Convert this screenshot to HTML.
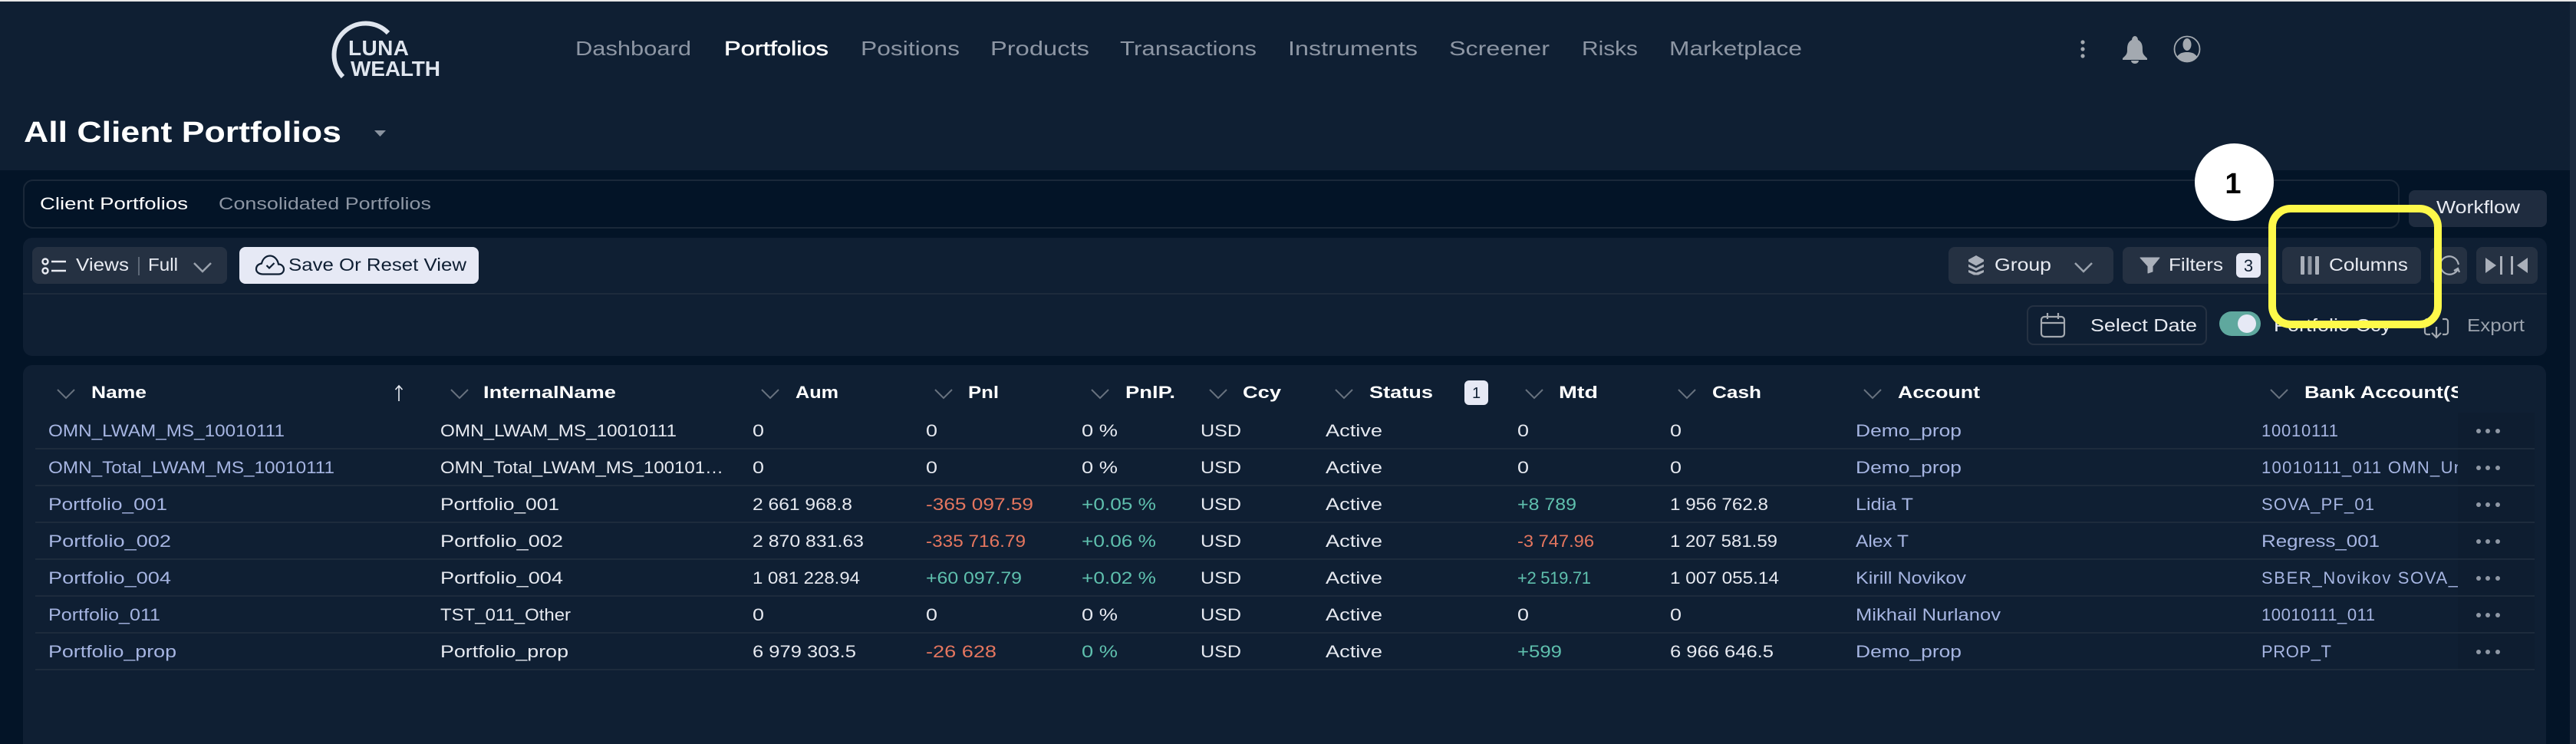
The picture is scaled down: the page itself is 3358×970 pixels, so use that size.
<!DOCTYPE html>
<html lang="en"><head><meta charset="utf-8"><title>All Client Portfolios</title>
<style>
html,body{margin:0;padding:0;width:3358px;height:970px;overflow:hidden;background:#031427}
svg{display:block;font-family:"Liberation Sans",sans-serif}
text{white-space:pre}
.r{font-size:22px;fill:#e6e9f0}
.n{font-size:22px;fill:#a6b5e2}
.g{font-size:22px;fill:#5fc0ae}
.d{font-size:22px;fill:#e5765f}
.h{font-size:22px;font-weight:700;fill:#fff}
.nav{font-size:26px;fill:#8d96a4}
.b{font-size:23px;fill:#e8ebf2}
.chev{fill:none;stroke:#68727f;stroke-width:2}
.bchev{fill:none;stroke:#9aa2ad;stroke-width:2.5}
.l{fill:#1d2b3c}
.dot{fill:#8f98a5}
</style></head><body>
<svg width="3358" height="970" viewBox="0 0 3358 970" xmlns="http://www.w3.org/2000/svg">
<defs>
<clipPath id="c1"><rect x="2940" y="490" width="264" height="400"/></clipPath>
<clipPath id="c2"><rect x="1460" y="490" width="72" height="50"/></clipPath>
</defs>
<rect width="3358" height="970" fill="#031427"/>
<rect width="3358" height="222" fill="#0f1f33"/>
<rect width="3358" height="2" fill="#e8e8e8"/>
<rect x="3350" y="2" width="8" height="968" fill="#1e2c3f"/>

<!-- logo -->
<path d="M447 100A41 41 0 0 1 506 43" fill="none" stroke="#dfe5ee" stroke-width="6"/>
<text x="454" y="72" font-size="28" font-weight="700" fill="#dfe5ee" textLength="79">LUNA</text>
<text x="457" y="99" font-size="28" font-weight="700" fill="#dfe5ee" textLength="117">WEALTH</text>

<!-- nav -->
<text class="nav" x="750" y="72" textLength="151" lengthAdjust="spacingAndGlyphs">Dashboard</text>
<text class="nav" x="944" y="72" textLength="136" lengthAdjust="spacingAndGlyphs" style="fill:#fff;stroke:#fff;stroke-width:.5">Portfolios</text>
<text class="nav" x="1122" y="72" textLength="129" lengthAdjust="spacingAndGlyphs">Positions</text>
<text class="nav" x="1291" y="72" textLength="129" lengthAdjust="spacingAndGlyphs">Products</text>
<text class="nav" x="1460" y="72" textLength="178" lengthAdjust="spacingAndGlyphs">Transactions</text>
<text class="nav" x="1679" y="72" textLength="169" lengthAdjust="spacingAndGlyphs">Instruments</text>
<text class="nav" x="1889" y="72" textLength="131" lengthAdjust="spacingAndGlyphs">Screener</text>
<text class="nav" x="2062" y="72" textLength="73" lengthAdjust="spacingAndGlyphs">Risks</text>
<text class="nav" x="2176" y="72" textLength="173" lengthAdjust="spacingAndGlyphs">Marketplace</text>

<!-- header icons -->
<g fill="#a3a9b0">
<circle cx="2715" cy="55" r="2.6"/><circle cx="2715" cy="64" r="2.6"/><circle cx="2715" cy="73" r="2.6"/>
<path d="M2779 52a4 5 0 0 1 8 0c6 3 6 9 6 14c0 5 3 7 6 10v2h-32v-2c3-3 6-5 6-10c0-5 0-11 6-14z"/>
<path d="M2778 79h10a5 4 0 0 1-10 0z"/>
<ellipse cx="2851" cy="58" rx="5.5" ry="8"/>
<path d="M2838 74c3-5 8-6 13-6s10 1 13 6a16.5 16.5 0 0 1-26 0z"/>
</g>
<circle cx="2851" cy="64" r="16.5" fill="none" stroke="#a3a9b0" stroke-width="1.8"/>

<!-- title -->
<text x="31" y="185" font-size="38" font-weight="700" fill="#fff" textLength="414" lengthAdjust="spacingAndGlyphs">All Client Portfolios</text>
<path d="M488 170h15l-7.500 8z" fill="#8a93a0"/>

<!-- tab bar -->
<rect x="31" y="235" width="3096" height="62" rx="12" fill="#031427" stroke="#1a2839" stroke-width="2"/>
<text class="r" x="52" y="273" textLength="193" lengthAdjust="spacingAndGlyphs" style="fill:#fff">Client Portfolios</text>
<text class="r" x="285" y="273" textLength="277" lengthAdjust="spacingAndGlyphs" style="fill:#8d96a4">Consolidated Portfolios</text>
<rect x="3140" y="248" width="180" height="48" rx="8" fill="#1f2c3f"/>
<text class="b" x="3176" y="278" textLength="109" lengthAdjust="spacingAndGlyphs">Workflow</text>

<!-- toolbar panel -->
<rect x="30" y="310" width="3290" height="154" rx="12" fill="#0f1f33"/>
<rect x="30" y="382" width="3290" height="2" class="l"/>

<!-- views -->
<rect x="42" y="322" width="254" height="48" rx="8" fill="#253142"/>
<g fill="none" stroke="#e8ebf2" stroke-width="2.400">
<circle cx="59" cy="341" r="3.500"/><circle cx="59" cy="353" r="3.500"/>
<path d="M67 341h19M67 353h19"/>
</g>
<text class="b" x="99" y="353" textLength="69" lengthAdjust="spacingAndGlyphs">Views</text>
<rect x="180" y="335" width="2" height="24" fill="#5d6877"/>
<text class="b" x="193" y="353" textLength="39" lengthAdjust="spacingAndGlyphs">Full</text>
<path class="bchev" d="M253 343l11 11 11-11"/>

<!-- save -->
<rect x="312" y="322" width="312" height="48" rx="8" fill="#e6e9f5"/>
<path d="M343 357.500h20c4.500 0 7-3 7-6.500s-3-6.500-7-6.500c-1-6-5.500-11-11-11s-9.500 4-11 10c-5 1-7 4-7 7.500s3.500 6.500 9 6.500z" fill="none" stroke="#0f1f33" stroke-width="2.200"/>
<path d="M347.500 346l3.500 3.500 6.500-6.500" fill="none" stroke="#0f1f33" stroke-width="2.200"/>
<text class="b" x="376" y="353" textLength="232" lengthAdjust="spacingAndGlyphs" style="fill:#0f1f33">Save Or Reset View</text>

<!-- group -->
<rect x="2540" y="322" width="215" height="48" rx="8" fill="#253142"/>
<g fill="#aab0ba">
<path d="M2576 333l10 5.500v2.500l-10 5.500-10-5.500v-2.500z"/>
<path d="M2566 344.500l10 5 10-5v3.500l-10 5-10-5z"/>
<path d="M2566 352l10 3.500 10-3.500v3l-7 3.500h-6l-7-3.500z"/>
</g>
<text class="b" x="2600" y="353" textLength="74" lengthAdjust="spacingAndGlyphs">Group</text>
<path class="bchev" d="M2705 343l11 11 11-11"/>

<!-- filters -->
<rect x="2767" y="322" width="200" height="48" rx="8" fill="#253142"/>
<path d="M2790 336h25l-9 11v7l-6 2v-9z" fill="#aab0ba" stroke="#aab0ba" stroke-linejoin="round"/>
<text class="b" x="2827" y="353" textLength="71" lengthAdjust="spacingAndGlyphs">Filters</text>
<rect x="2915" y="330" width="32" height="32" rx="6" fill="#e6e9f5"/>
<text x="2931" y="354" font-size="22" fill="#0f1f33" text-anchor="middle">3</text>

<!-- columns -->
<rect x="2975" y="322" width="181" height="48" rx="8" fill="#253142"/>
<rect x="2999" y="334" width="5" height="24" rx="1" fill="#aab0ba"/>
<rect x="3008.500" y="334" width="5" height="24" rx="1" fill="#8f96a2"/>
<rect x="3018" y="334" width="5" height="24" rx="1" fill="#aab0ba"/>
<text class="b" x="3036" y="353" textLength="103" lengthAdjust="spacingAndGlyphs">Columns</text>

<!-- refresh -->
<rect x="3168" y="322" width="48" height="48" rx="8" fill="#253142"/>
<g fill="none" stroke="#aab0ba" stroke-width="2.200">
<path d="M3182 341a12 12 0 0 1 22 1l1 3"/>
<path d="M3204 351a12 12 0 0 1-22-1"/>
<path d="M3199 353l5-3 2 5"/>
</g>

<!-- collapse -->
<rect x="3228" y="322" width="80" height="48" rx="8" fill="#253142"/>
<g fill="#aab0ba">
<path d="M3240 336l14 10-14 10z"/><rect x="3259" y="334" width="3" height="24"/>
<rect x="3273" y="334" width="3" height="24"/><path d="M3295 336l-14 10 14 10z"/>
</g>

<!-- second row -->
<rect x="2643" y="399" width="233" height="50" rx="8" fill="none" stroke="#253142" stroke-width="2"/>
<g fill="none" stroke="#a3a9b0" stroke-width="2.200">
<rect x="2661" y="413" width="30" height="26" rx="4"/>
<path d="M2661 421h30M2669 408v8M2683 408v8"/>
</g>
<text class="b" x="2725" y="432" textLength="139" lengthAdjust="spacingAndGlyphs">Select Date</text>
<rect x="2893" y="406" width="54" height="32" rx="16" fill="#5fa89e"/>
<circle cx="2929" cy="422" r="12" fill="#e6e9f5"/>
<text class="b" x="2964" y="432" textLength="153" lengthAdjust="spacingAndGlyphs">Portfolio Ccy</text>
<g fill="none" stroke="#a3a9b0" stroke-width="2.200">
<path d="M3168 416h-4a3 3 0 0 0-3 3v14a3 3 0 0 0 3 3h4M3184 416h4a3 3 0 0 1 3 3v14a3 3 0 0 1-3 3h-4"/>
<path d="M3176 426v14M3170 434l6 6 6-6"/>
</g>
<text class="b" x="3216" y="432" textLength="75" lengthAdjust="spacingAndGlyphs" style="fill:#9aa2ad">Export</text>

<!-- table panel -->
<rect x="30" y="476" width="3289" height="520" rx="12" fill="#0f1f33"/>
<rect x="3204" y="538" width="100" height="337" fill="#0e1d30"/>

<!-- header chevrons -->
<path class="chev" d="M75 508l11 11 11-11M588 508l11 11 11-11M993 508l11 11 11-11M1219 508l11 11 11-11M1423 508l11 11 11-11M1577 508l11 11 11-11M1741 508l11 11 11-11M1989 508l11 11 11-11M2188 508l11 11 11-11M2430 508l11 11 11-11M2960 508l11 11 11-11"/>
<text class="h" x="119" y="519" textLength="72" lengthAdjust="spacingAndGlyphs">Name</text>
<path d="M520 523v-20M515.500 508l4.500-5 4.500 5" fill="none" stroke="#e8ebf2" stroke-width="1.600"/>
<text class="h" x="630" y="519" textLength="173" lengthAdjust="spacingAndGlyphs">InternalName</text>
<text class="h" x="1037" y="519" textLength="56" lengthAdjust="spacingAndGlyphs">Aum</text>
<text class="h" x="1262" y="519" textLength="40" lengthAdjust="spacingAndGlyphs">Pnl</text>
<text class="h" x="1467" y="519" textLength="65" lengthAdjust="spacingAndGlyphs" clip-path="url(#c2)">PnlP.</text>
<text class="h" x="1620" y="519" textLength="50" lengthAdjust="spacingAndGlyphs">Ccy</text>
<text class="h" x="1785" y="519" textLength="83" lengthAdjust="spacingAndGlyphs">Status</text>
<rect x="1909" y="496" width="31" height="32" rx="6" fill="#e6e9f5"/>
<text x="1924.500" y="519" font-size="20" fill="#0f1f33" text-anchor="middle">1</text>
<text class="h" x="2032" y="519" textLength="51" lengthAdjust="spacingAndGlyphs">Mtd</text>
<text class="h" x="2232" y="519" textLength="64" lengthAdjust="spacingAndGlyphs">Cash</text>
<text class="h" x="2474" y="519" textLength="107" lengthAdjust="spacingAndGlyphs">Account</text>
<text class="h" x="3004" y="519" textLength="208" lengthAdjust="spacingAndGlyphs" clip-path="url(#c1)">Bank Account(S</text>

<!-- row lines -->
<rect class="l" x="46" y="584" width="3258" height="2"/>
<rect class="l" x="46" y="632" width="3258" height="2"/>
<rect class="l" x="46" y="680" width="3258" height="2"/>
<rect class="l" x="46" y="728" width="3258" height="2"/>
<rect class="l" x="46" y="776" width="3258" height="2"/>
<rect class="l" x="46" y="824" width="3258" height="2"/>
<rect class="l" x="46" y="872" width="3258" height="2"/>

<!-- Name col -->
<text class="n" x="63" y="569" textLength="308" lengthAdjust="spacingAndGlyphs">OMN_LWAM_MS_10010111</text>
<text class="n" x="63" y="617" textLength="373" lengthAdjust="spacingAndGlyphs">OMN_Total_LWAM_MS_10010111</text>
<text class="n" x="63" y="665" textLength="155" lengthAdjust="spacingAndGlyphs">Portfolio_001</text>
<text class="n" x="63" y="713" textLength="160" lengthAdjust="spacingAndGlyphs">Portfolio_002</text>
<text class="n" x="63" y="761" textLength="160" lengthAdjust="spacingAndGlyphs">Portfolio_004</text>
<text class="n" x="63" y="809" textLength="146" lengthAdjust="spacingAndGlyphs">Portfolio_011</text>
<text class="n" x="63" y="857" textLength="167" lengthAdjust="spacingAndGlyphs">Portfolio_prop</text>

<!-- InternalName -->
<text class="r" x="574" y="569" textLength="308" lengthAdjust="spacingAndGlyphs">OMN_LWAM_MS_10010111</text>
<text class="r" x="574" y="617" textLength="369" lengthAdjust="spacingAndGlyphs">OMN_Total_LWAM_MS_100101…</text>
<text class="r" x="574" y="665" textLength="155" lengthAdjust="spacingAndGlyphs">Portfolio_001</text>
<text class="r" x="574" y="713" textLength="160" lengthAdjust="spacingAndGlyphs">Portfolio_002</text>
<text class="r" x="574" y="761" textLength="160" lengthAdjust="spacingAndGlyphs">Portfolio_004</text>
<text class="r" x="574" y="809" textLength="170" lengthAdjust="spacingAndGlyphs">TST_011_Other</text>
<text class="r" x="574" y="857" textLength="167" lengthAdjust="spacingAndGlyphs">Portfolio_prop</text>

<!-- Aum -->
<text class="r" x="981" y="569" textLength="15" lengthAdjust="spacingAndGlyphs">0</text>
<text class="r" x="981" y="617" textLength="15" lengthAdjust="spacingAndGlyphs">0</text>
<text class="r" x="981" y="665" textLength="130" lengthAdjust="spacingAndGlyphs">2 661 968.8</text>
<text class="r" x="981" y="713" textLength="145" lengthAdjust="spacingAndGlyphs">2 870 831.63</text>
<text class="r" x="981" y="761" textLength="140" lengthAdjust="spacingAndGlyphs">1 081 228.94</text>
<text class="r" x="981" y="809" textLength="15" lengthAdjust="spacingAndGlyphs">0</text>
<text class="r" x="981" y="857" textLength="135" lengthAdjust="spacingAndGlyphs">6 979 303.5</text>

<!-- Pnl -->
<text class="r" x="1207" y="569" textLength="15" lengthAdjust="spacingAndGlyphs">0</text>
<text class="r" x="1207" y="617" textLength="15" lengthAdjust="spacingAndGlyphs">0</text>
<text class="d" x="1207" y="665" textLength="140" lengthAdjust="spacingAndGlyphs">-365 097.59</text>
<text class="d" x="1207" y="713" textLength="130" lengthAdjust="spacingAndGlyphs">-335 716.79</text>
<text class="g" x="1207" y="761" textLength="125" lengthAdjust="spacingAndGlyphs">+60 097.79</text>
<text class="r" x="1207" y="809" textLength="15" lengthAdjust="spacingAndGlyphs">0</text>
<text class="d" x="1207" y="857" textLength="92" lengthAdjust="spacingAndGlyphs">-26 628</text>

<!-- PnlP -->
<text class="r" x="1410" y="569" textLength="47" lengthAdjust="spacingAndGlyphs">0 %</text>
<text class="r" x="1410" y="617" textLength="47" lengthAdjust="spacingAndGlyphs">0 %</text>
<text class="g" x="1410" y="665" textLength="97" lengthAdjust="spacingAndGlyphs">+0.05 %</text>
<text class="g" x="1410" y="713" textLength="97" lengthAdjust="spacingAndGlyphs">+0.06 %</text>
<text class="g" x="1410" y="761" textLength="97" lengthAdjust="spacingAndGlyphs">+0.02 %</text>
<text class="r" x="1410" y="809" textLength="47" lengthAdjust="spacingAndGlyphs">0 %</text>
<text class="g" x="1410" y="857" textLength="47" lengthAdjust="spacingAndGlyphs">0 %</text>

<!-- Ccy -->
<text class="r" x="1565" y="569" textLength="53" lengthAdjust="spacingAndGlyphs">USD</text>
<text class="r" x="1565" y="617" textLength="53" lengthAdjust="spacingAndGlyphs">USD</text>
<text class="r" x="1565" y="665" textLength="53" lengthAdjust="spacingAndGlyphs">USD</text>
<text class="r" x="1565" y="713" textLength="53" lengthAdjust="spacingAndGlyphs">USD</text>
<text class="r" x="1565" y="761" textLength="53" lengthAdjust="spacingAndGlyphs">USD</text>
<text class="r" x="1565" y="809" textLength="53" lengthAdjust="spacingAndGlyphs">USD</text>
<text class="r" x="1565" y="857" textLength="53" lengthAdjust="spacingAndGlyphs">USD</text>

<!-- Status -->
<text class="r" x="1728" y="569" textLength="74" lengthAdjust="spacingAndGlyphs">Active</text>
<text class="r" x="1728" y="617" textLength="74" lengthAdjust="spacingAndGlyphs">Active</text>
<text class="r" x="1728" y="665" textLength="74" lengthAdjust="spacingAndGlyphs">Active</text>
<text class="r" x="1728" y="713" textLength="74" lengthAdjust="spacingAndGlyphs">Active</text>
<text class="r" x="1728" y="761" textLength="74" lengthAdjust="spacingAndGlyphs">Active</text>
<text class="r" x="1728" y="809" textLength="74" lengthAdjust="spacingAndGlyphs">Active</text>
<text class="r" x="1728" y="857" textLength="74" lengthAdjust="spacingAndGlyphs">Active</text>

<!-- Mtd -->
<text class="r" x="1978" y="569" textLength="15" lengthAdjust="spacingAndGlyphs">0</text>
<text class="r" x="1978" y="617" textLength="15" lengthAdjust="spacingAndGlyphs">0</text>
<text class="g" x="1978" y="665" textLength="77" lengthAdjust="spacingAndGlyphs">+8 789</text>
<text class="d" x="1978" y="713" textLength="100" lengthAdjust="spacingAndGlyphs">-3 747.96</text>
<text class="g" x="1978" y="761" textLength="96">+2 519.71</text>
<text class="r" x="1978" y="809" textLength="15" lengthAdjust="spacingAndGlyphs">0</text>
<text class="g" x="1978" y="857" textLength="58" lengthAdjust="spacingAndGlyphs">+599</text>

<!-- Cash -->
<text class="r" x="2177" y="569" textLength="15" lengthAdjust="spacingAndGlyphs">0</text>
<text class="r" x="2177" y="617" textLength="15" lengthAdjust="spacingAndGlyphs">0</text>
<text class="r" x="2177" y="665" textLength="128" lengthAdjust="spacingAndGlyphs">1 956 762.8</text>
<text class="r" x="2177" y="713" textLength="140" lengthAdjust="spacingAndGlyphs">1 207 581.59</text>
<text class="r" x="2177" y="761" textLength="142" lengthAdjust="spacingAndGlyphs">1 007 055.14</text>
<text class="r" x="2177" y="809" textLength="15" lengthAdjust="spacingAndGlyphs">0</text>
<text class="r" x="2177" y="857" textLength="135" lengthAdjust="spacingAndGlyphs">6 966 646.5</text>

<!-- Account -->
<text class="n" x="2419" y="569" textLength="138" lengthAdjust="spacingAndGlyphs">Demo_prop</text>
<text class="n" x="2419" y="617" textLength="138" lengthAdjust="spacingAndGlyphs">Demo_prop</text>
<text class="n" x="2419" y="665" textLength="75" lengthAdjust="spacingAndGlyphs">Lidia T</text>
<text class="n" x="2419" y="713" textLength="69" lengthAdjust="spacingAndGlyphs">Alex T</text>
<text class="n" x="2419" y="761" textLength="144" lengthAdjust="spacingAndGlyphs">Kirill Novikov</text>
<text class="n" x="2419" y="809" textLength="189" lengthAdjust="spacingAndGlyphs">Mikhail Nurlanov</text>
<text class="n" x="2419" y="857" textLength="138" lengthAdjust="spacingAndGlyphs">Demo_prop</text>

<!-- Bank -->
<text class="n" x="2948" y="569" textLength="100">10010111</text>
<text class="n" x="2948" y="617" textLength="263" clip-path="url(#c1)">10010111_011 OMN_Un</text>
<text class="n" x="2948" y="665" textLength="147">SOVA_PF_01</text>
<text class="n" x="2948" y="713" textLength="154" lengthAdjust="spacingAndGlyphs">Regress_001</text>
<text class="n" x="2948" y="761" textLength="256" clip-path="url(#c1)">SBER_Novikov SOVA_</text>
<text class="n" x="2948" y="809" textLength="148">10010111_011</text>
<text class="n" x="2948" y="857" textLength="91">PROP_T</text>

<!-- row dots -->
<g class="dot">
<circle cx="3231" cy="562" r="3"/><circle cx="3243" cy="562" r="3"/><circle cx="3256" cy="562" r="3"/>
<circle cx="3231" cy="610" r="3"/><circle cx="3243" cy="610" r="3"/><circle cx="3256" cy="610" r="3"/>
<circle cx="3231" cy="658" r="3"/><circle cx="3243" cy="658" r="3"/><circle cx="3256" cy="658" r="3"/>
<circle cx="3231" cy="706" r="3"/><circle cx="3243" cy="706" r="3"/><circle cx="3256" cy="706" r="3"/>
<circle cx="3231" cy="754" r="3"/><circle cx="3243" cy="754" r="3"/><circle cx="3256" cy="754" r="3"/>
<circle cx="3231" cy="802" r="3"/><circle cx="3243" cy="802" r="3"/><circle cx="3256" cy="802" r="3"/>
<circle cx="3231" cy="850" r="3"/><circle cx="3243" cy="850" r="3"/><circle cx="3256" cy="850" r="3"/>
</g>

<!-- annotation -->
<rect x="2962" y="272" width="216" height="151" rx="24" fill="none" stroke="#fef94a" stroke-width="10"/>
<ellipse cx="2912.500" cy="237.500" rx="51.500" ry="50.500" fill="#fff"/>
<text x="2911" y="252" font-size="38" font-weight="700" fill="#000" text-anchor="middle">1</text>
</svg>
</body></html>
